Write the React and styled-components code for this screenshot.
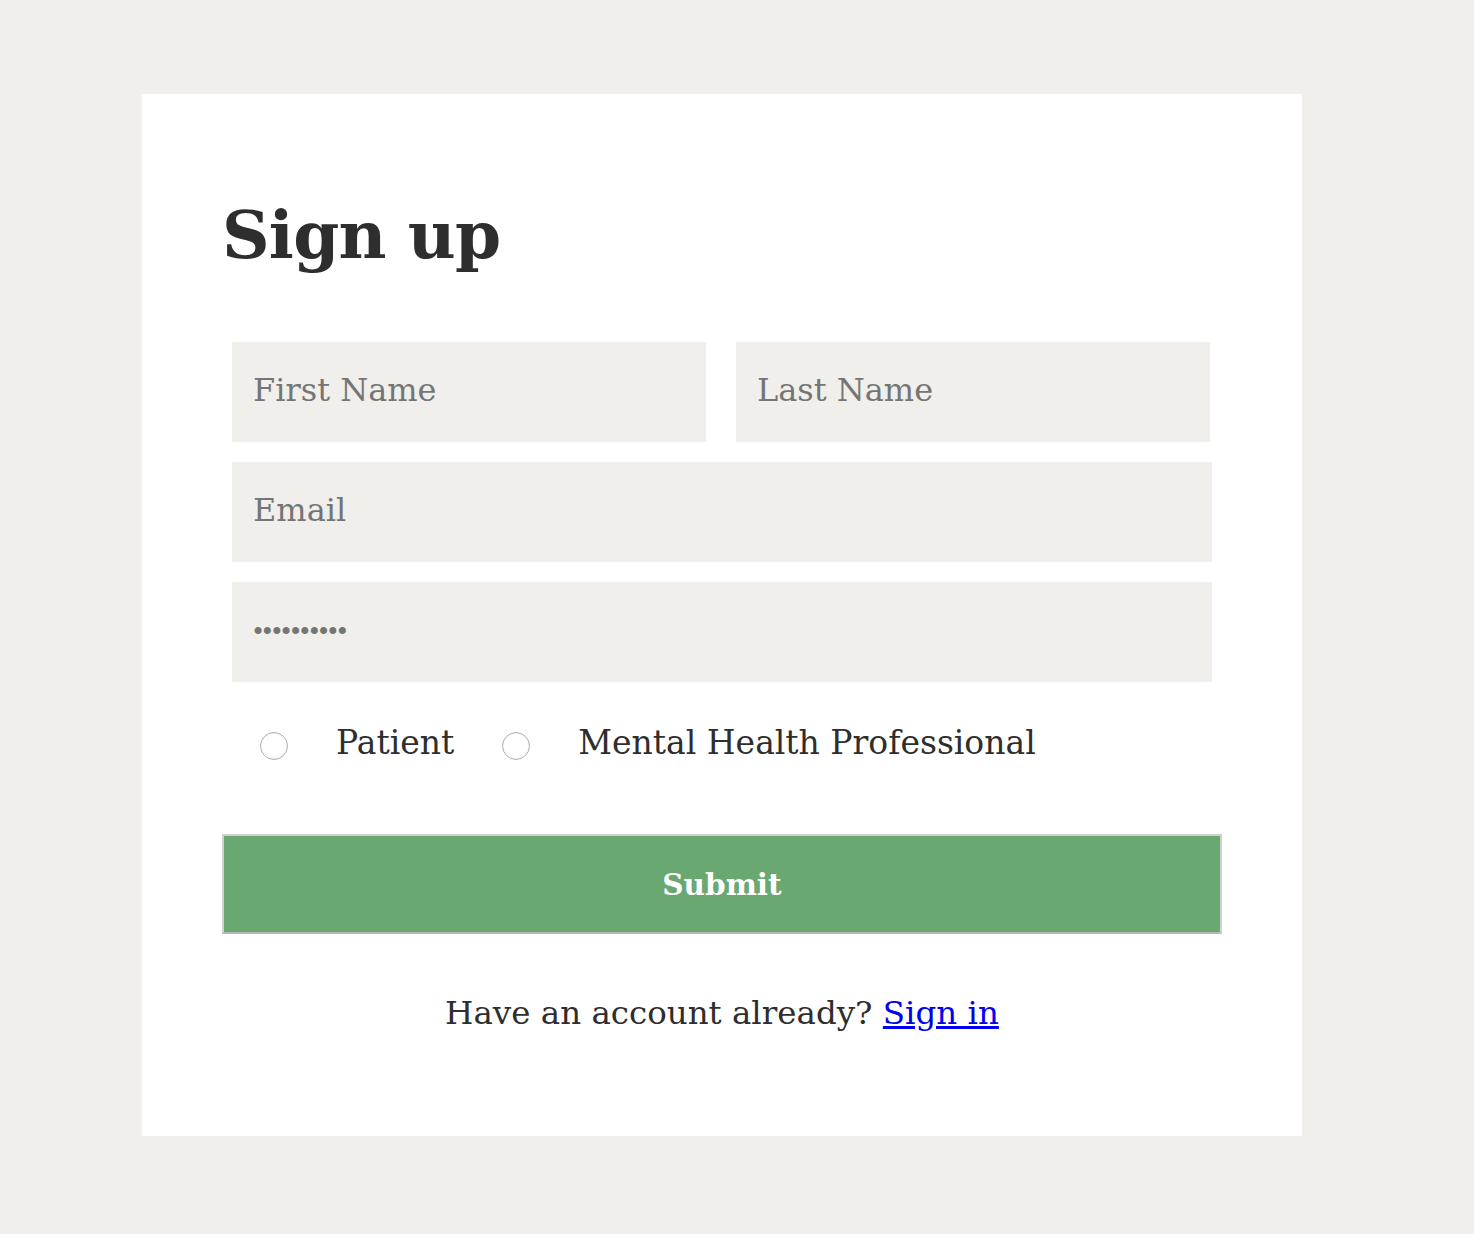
import React, { useState } from "react";
import styled, { createGlobalStyle } from "styled-components";

const GlobalStyle = createGlobalStyle`
  body {
    margin: 0;
    background-color: #f0efeb;
    font-family: "DejaVu Serif", "Liberation Serif", serif;
    color: #2e2e2e;
  }
`;

const Page = styled.div`
  padding: 94px 0 98px 142px;
`;

const Card = styled.div`
  width: 1160px;
  height: 1042px;
  box-sizing: border-box;
  background-color: #fff;
  padding: 0 80px;
`;

const Title = styled.h1`
  margin: 0;
  padding-top: 101px;
  font-size: 66px;
  line-height: 80px;
  font-weight: bold;
  color: #2e2e2e;
  letter-spacing: -0.8px;
`;

const Form = styled.form`
  margin-top: 67px;
  display: flex;
  flex-direction: column;
`;

const Fields = styled.div`
  padding: 0 10px;
  display: flex;
  flex-direction: column;
  gap: 20px;
`;

const NameRow = styled.div`
  display: flex;
  gap: 30px;
  width: 978px;
`;

const Input = styled.input`
  flex: ${props => (props.half ? "1 1 0" : "none")};
  width: ${props => (props.half ? "auto" : "100%")};
  min-width: 0;
  height: 100px;
  box-sizing: border-box;
  border: none;
  outline: none;
  background-color: #f0efeb;
  padding: 0 21px 4px;
  font-family: inherit;
  font-size: 32px;
  color: #757575;
  &::placeholder {
    color: #757575;
  }
  &[type="password"] {
    font-size: 24px;
    letter-spacing: -4.8px;
    padding: 0 19px;
  }
`;

const RoleRow = styled.div`
  display: flex;
  align-items: center;
  padding-left: 38px;
  margin-top: 32px;
  height: 56px;
`;

const Radio = styled.input`
  appearance: none;
  -webkit-appearance: none;
  flex: none;
  width: 28px;
  height: 28px;
  margin: 8px 48px 0 0;
  border-radius: 50%;
  border: 1px solid #b0b0b0;
  background: radial-gradient(circle at 50% 40%, #ffffff 55%, #ececec 100%);
  box-shadow: inset 0 1px 1px rgba(0, 0, 0, 0.06);
  box-sizing: border-box;
  &:checked {
    background: radial-gradient(circle, #4a4a4a 0 5px, #fff 6px);
  }
`;

const RoleLabel = styled.label`
  font-size: 33px;
  color: #2e2e2e;
  margin-right: ${props => props.gap || 0}px;
  cursor: pointer;
`;

const Submit = styled.button`
  margin-top: 64px;
  width: 1000px;
  height: 100px;
  background-color: #6aa872;
  border: 2px solid #d0d0d0;
  border-bottom-color: #b8b8b8;
  color: #fff;
  font-family: inherit;
  font-weight: bold;
  font-size: 29.5px;
  cursor: pointer;
`;

const Footer = styled.p`
  margin: 60px 0 0;
  text-align: center;
  font-size: 32.5px;
  color: #2e2e2e;
  a {
    color: #0000ee;
  }
`;

const SignUp = () => {
  const [role, setRole] = useState("");
  return (
    <Card>
      <Title>Sign up</Title>
      <Form onSubmit={e => e.preventDefault()}>
        <Fields>
          <NameRow>
            <Input half type="text" placeholder="First Name" />
            <Input half type="text" placeholder="Last Name" />
          </NameRow>
          <Input type="email" placeholder="Email" />
          <Input type="password" defaultValue="1234567890" />
        </Fields>
        <RoleRow>
          <Radio
            type="radio"
            id="patient"
            name="role"
            checked={role === "patient"}
            onChange={() => setRole("patient")}
          />
          <RoleLabel htmlFor="patient" gap={48}>Patient</RoleLabel>
          <Radio
            type="radio"
            id="professional"
            name="role"
            checked={role === "professional"}
            onChange={() => setRole("professional")}
          />
          <RoleLabel htmlFor="professional">Mental Health Professional</RoleLabel>
        </RoleRow>
        <Submit type="submit">Submit</Submit>
        <Footer>
          Have an account already? <a href="#signin">Sign in</a>
        </Footer>
      </Form>
    </Card>
  );
};

export default function App() {
  return (
    <Page>
      <GlobalStyle />
      <SignUp />
    </Page>
  );
}
